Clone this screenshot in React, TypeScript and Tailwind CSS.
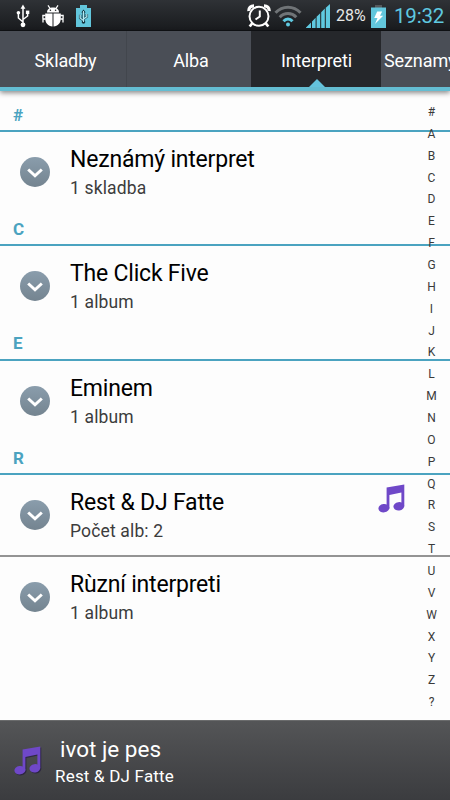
type Artist = { name: string; info: string; playing?: boolean };
type Section = { letter: string; artists: Artist[] };

const sections: Section[] = [
  { letter: '#', artists: [{ name: 'Neznámý interpret', info: '1 skladba' }] },
  { letter: 'C', artists: [{ name: 'The Click Five', info: '1 album' }] },
  { letter: 'E', artists: [{ name: 'Eminem', info: '1 album' }] },
  {
    letter: 'R',
    artists: [
      { name: 'Rest & DJ Fatte', info: 'Počet alb: 2', playing: true },
      { name: 'Rùzní interpreti', info: '1 album' },
    ],
  },
];

const indexLetters = '#ABCDEFGHIJKLMNOPQRSTUVWXYZ?'.split('');

function NoteIcon({ className }: { className?: string }) {
  return (
    <svg viewBox="0 0 27 29" className={className} fill="#6f48c8">
      <path d="M8.6 3.6 26.3.4V22.5H23.4V8.6L11.4 11V24.5H8.6Z" />
      <ellipse cx="5.9" cy="24.2" rx="5.5" ry="4.2" transform="rotate(-8 5.9 24.2)" />
      <ellipse cx="20.8" cy="22.3" rx="5.4" ry="4.2" transform="rotate(-8 20.8 22.3)" />
    </svg>
  );
}

function UsbIcon() {
  return (
    <svg viewBox="0 0 14 24" className="h-6 w-3.5" fill="#fff">
      <path d="M7 3v17M7 18l-4.6-4V9.5M7 15.5l4.6-3.5V8.5" stroke="#fff" strokeWidth="1.5" fill="none" />
      <path d="m7 .5 2.4 4.3H4.6Z" />
      <circle cx="2.4" cy="8.8" r="1.8" />
      <path d="M9.9 6.6h3.4V10H9.9Z" />
      <circle cx="7" cy="20.8" r="2.4" />
    </svg>
  );
}

function AndroidIcon() {
  return (
    <svg viewBox="0 0 22 22" className="h-[22px] w-[22px]" fill="#fff">
      <path d="M5 7.4C5 4.2 7.6 2.6 11 2.6s6 1.6 6 4.8Z" />
      <path d="m6 .4 2.2 3.2M16 .4l-2.2 3.2" stroke="#fff" strokeWidth="1.2" />
      <path d="M3.2 8.4H10.5V21.4C6.1 21.2 3.2 18 3.2 13.5ZM11.5 8.4H18.8V13.5C18.8 18 15.9 21.2 11.5 21.4Z" />
      <path d="M3.6 10.5H.9v3M3.6 14H1v3.6M18.4 10.5h2.7v3M18.4 14H21v3.6" stroke="#fff" strokeWidth="1.3" fill="none" />
      <circle cx="8.4" cy="5.3" r=".8" fill="#222529" />
      <circle cx="13.6" cy="5.3" r=".8" fill="#222529" />
    </svg>
  );
}

function UsbBattery() {
  return (
    <svg viewBox="0 0 15 24" className="h-6 w-[15px]">
      <path d="M4 1h7v3h4v19H0V4h4Z" fill="#62c6dc" />
      <path d="M7.5 7v11M7.5 16.6 4.2 14v-3.2M7.5 15 10.8 12.6V10" stroke="#2c5f6d" strokeWidth="2.6" fill="none" />
      <path d="m7.5 5.4 2.2 3.2H5.3Z" fill="#17343e" />
      <circle cx="7.5" cy="18" r="1.8" fill="#17343e" />
      <path d="M7.5 7v11M7.5 16.6 4.2 14v-3.2M7.5 15 10.8 12.6V10" stroke="#b5eaf4" strokeWidth="1.1" fill="none" />
    </svg>
  );
}

function AlarmIcon() {
  return (
    <svg viewBox="0 0 24 24" className="h-6 w-6" fill="none" stroke="#fff">
      <circle cx="12" cy="12.3" r="9.5" strokeWidth="2" />
      <path d="M12.8 6.5v6L8.5 15.5" strokeWidth="2" />
      <path d="M1.9 7C1.6 3.8 3.8 1.8 7 1.8M22.1 7C22.4 3.8 20.2 1.8 17 1.8" strokeWidth="3.2" />
      <path d="m5.5 19-2.8 3.5M18.5 19l2.8 3.5" strokeWidth="2.8" />
    </svg>
  );
}

function WifiIcon() {
  return (
    <svg viewBox="0 0 28 22" className="h-[22px] w-7" fill="none">
      <path d="M1.5 7.8C8.5.4 19.5.4 26.5 7.8" stroke="#707477" strokeWidth="3" />
      <path d="M5.7 12.2c4.7-4.9 11.9-4.9 16.6 0" stroke="#707477" strokeWidth="3" />
      <path d="M9.5 16.2c2.6-2.9 6.4-2.9 9 0" stroke="#5fc9e0" strokeWidth="3" />
      <circle cx="14" cy="19.5" r="2" fill="#5fc9e0" />
    </svg>
  );
}

function SignalIcon() {
  return (
    <svg viewBox="0 0 24 24" className="h-6 w-6" fill="#5fc9e0">
      <path d="M0 24v-.6l5-5V24ZM6 24v-6.6l3.6-3.6V24ZM10.6 24V12.8l3.6-3.6V24ZM15.2 24V8.2l3.6-3.6V24ZM19.8 24V3.8L24 0v24Z" />
    </svg>
  );
}

function ChargingBattery() {
  return (
    <svg viewBox="0 0 15 24" className="h-6 w-[15px]">
      <path d="M4 1h7v3H4Z" fill="#55595c" />
      <path d="M0 3.5h15V24H0Z" fill="#62c6dc" />
      <path d="M6.2 7.5h5L9 11.8h3.2L4 20l2.5-6H3.2Z" fill="#fff" />
    </svg>
  );
}

function StatusBar() {
  return (
    <div className="flex h-[31px] items-center border-b border-[#101215] bg-gradient-to-b from-[#2f3236] to-[#191b1e] pl-4 pr-[7px] pt-[2px]">
      <UsbIcon />
      <div className="ml-3"><AndroidIcon /></div>
      <div className="ml-3"><UsbBattery /></div>
      <div className="ml-auto flex items-center">
        <AlarmIcon />
        <div className="ml-[3px]"><WifiIcon /></div>
        <div className="ml-1"><SignalIcon /></div>
        <span className="ml-[6px] w-[31px] whitespace-nowrap text-[16px] text-[#e8e8e8]">28%</span>
        <div className="ml-1"><ChargingBattery /></div>
        <span className="ml-2 w-[49px] whitespace-nowrap text-[20.5px] tracking-[-0.2px] text-[#5fc9e0]">19:32</span>
      </div>
    </div>
  );
}

function Tabs() {
  return (
    <div className="relative z-10 flex h-[60px] border-b-4 border-[#64bdd2] bg-[#4a4e56] text-[18px] tracking-[-0.1px] text-white shadow-[0_2px_5px_rgba(0,0,0,0.45)]">
      <div className="flex w-[127px] shrink-0 items-center justify-center border-r border-[#42464d] pl-[5px] pt-[3px]">Skladby</div>
      <div className="flex w-[124px] shrink-0 items-center justify-center pl-1 pt-[3px]">Alba</div>
      <div className="relative flex w-[130px] shrink-0 items-center justify-center bg-[#25272b] pl-[1px] pt-[3px]">
        Interpreti
        <svg viewBox="0 0 16 8" className="absolute bottom-0 left-[58px] h-2 w-4" fill="#64c3dc">
          <path d="M0 8 8 0l8 8Z" />
        </svg>
      </div>
      <div className="flex min-w-0 flex-1 items-center overflow-hidden whitespace-nowrap pl-[3px] pt-[3px]">Seznamy</div>
    </div>
  );
}

function ArtistRow({ artist, divider }: { artist: Artist; divider: boolean }) {
  return (
    <div className={`flex items-center pl-5 ${divider ? 'h-[81px] border-t-2 border-[#949494]' : 'h-[80.3px]'}`}>
      <div className="flex h-[30px] w-[30px] items-center justify-center rounded-full bg-gradient-to-b from-[#8a9dac] to-[#748490]">
        <svg viewBox="0 0 16 10" className="mt-[2px] h-[10px] w-4" fill="none" stroke="#fff" strokeWidth="3">
          <path d="m1.2 1.5 6.8 6.3 6.8-6.3" />
        </svg>
      </div>
      <div className="ml-5 flex-1 pt-[3px]">
        <div className="text-[23px] leading-[29px] tracking-[-0.2px] text-black">{artist.name}</div>
        <div className="text-[17.5px] leading-[28px] tracking-[0.15px] text-[#3c3c3c]">{artist.info}</div>
      </div>
      {artist.playing && <NoteIcon className="mr-[45px] mb-[34px] h-[29px] w-[27px]" />}
    </div>
  );
}

export default function App() {
  return (
    <div className="flex h-[800px] w-[450px] flex-col overflow-hidden bg-[#fdfdfd] font-['Roboto',sans-serif]">
      <StatusBar />
      <Tabs />
      <div className="relative flex-1 pt-[7px]">
        {sections.map((section) => (
          <div key={section.letter}>
            <div className="flex h-[34px] items-center border-b-2 border-[#4ba3c0] pl-[13px] pt-[3px] text-[17px] font-bold text-[#4ba3c0]">
              {section.letter}
            </div>
            {section.artists.map((artist, i) => (
              <ArtistRow key={artist.name} artist={artist} divider={i > 0} />
            ))}
          </div>
        ))}
        <div className="absolute right-2 top-[11px] flex w-[21px] flex-col items-center text-[12px] text-[#3a3a3a]">
          {indexLetters.map((letter) => (
            <span key={letter} className="h-[21.86px] leading-[21.86px]">{letter}</span>
          ))}
        </div>
      </div>
      <div className="flex h-20 items-center border-t border-[#6a6b6c] bg-gradient-to-b from-[#545557] to-[#3b3c3f] pl-[14px] text-white">
        <NoteIcon className="h-[29px] w-[27px] drop-shadow-[1px_1px_0_rgba(30,20,60,0.6)]" />
        <div className="ml-[14px] pt-[2px]">
          <div className="pl-[5px] text-[22.5px] leading-[28px]">ivot je pes</div>
          <div className="text-[17px] leading-[26px] tracking-[0.2px]">Rest &amp; DJ Fatte</div>
        </div>
      </div>
    </div>
  );
}
